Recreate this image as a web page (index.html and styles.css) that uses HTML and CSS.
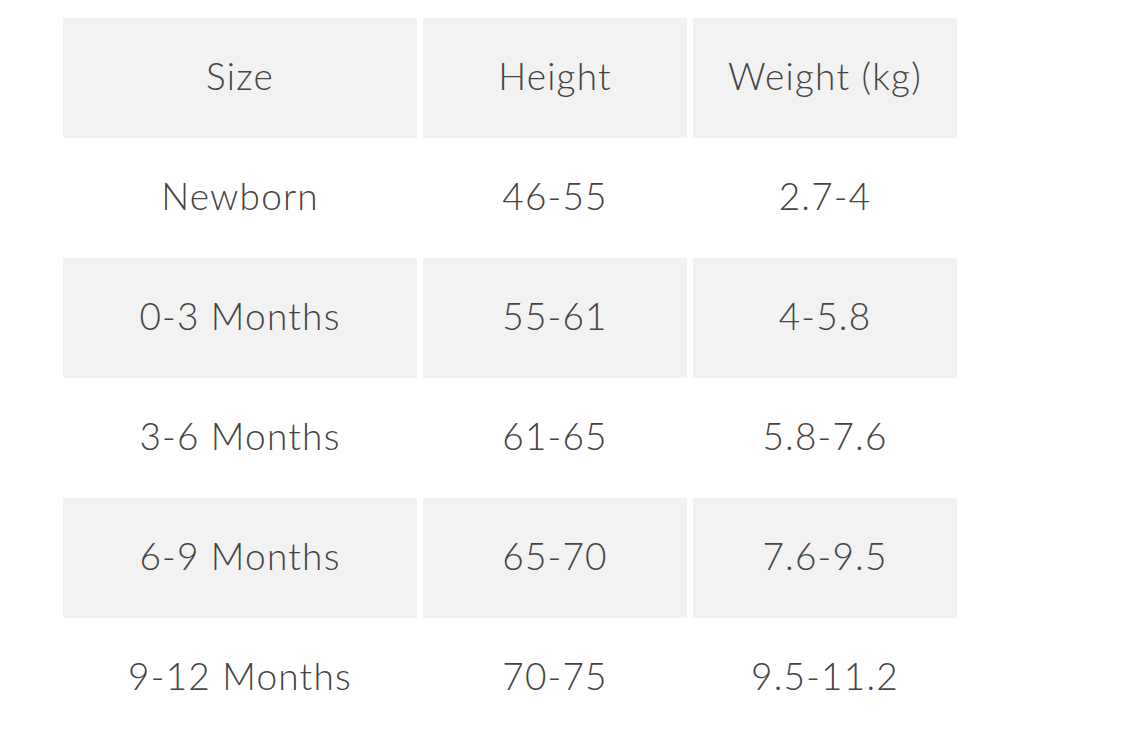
FILE: index.html
```html
<!DOCTYPE html>
<html>
<head>
<meta charset="utf-8">
<link rel="stylesheet" href="styles.css">
</head>
<body>
<table class="size-table">
  <tr class="shaded"><td class="c1">Size</td><td class="c2">Height</td><td class="c3">Weight (kg)</td></tr>
  <tr><td>Newborn</td><td>46-55</td><td>2.7-4</td></tr>
  <tr class="shaded"><td>0-3 Months</td><td>55-61</td><td>4-5.8</td></tr>
  <tr><td>3-6 Months</td><td>61-65</td><td>5.8-7.6</td></tr>
  <tr class="shaded"><td>6-9 Months</td><td>65-70</td><td>7.6-9.5</td></tr>
  <tr><td>9-12 Months</td><td>70-75</td><td>9.5-11.2</td></tr>
</table>
</body>
</html>
```
FILE: styles.css
```css
html, body {
  margin: 0;
  padding: 0;
  background: #ffffff;
}
body {
  padding: 18px 0 0 57px;
  font-family: "Lato", "Liberation Sans", sans-serif;
  color: #444444;
}
.size-table {
  border-collapse: separate;
  border-spacing: 6px 0;
}
.size-table td {
  height: 120px;
  box-sizing: border-box;
  padding: 0 0 5px 0;
  text-align: center;
  vertical-align: middle;
  font-size: 37px;
  font-weight: 300;
  letter-spacing: 1.2px;
  line-height: 1;
}
.size-table .c1 { width: 354px; }
.size-table .c2 { width: 264px; }
.size-table .c3 { width: 264px; }
.shaded td {
  background: #f2f2f2;
}
```
